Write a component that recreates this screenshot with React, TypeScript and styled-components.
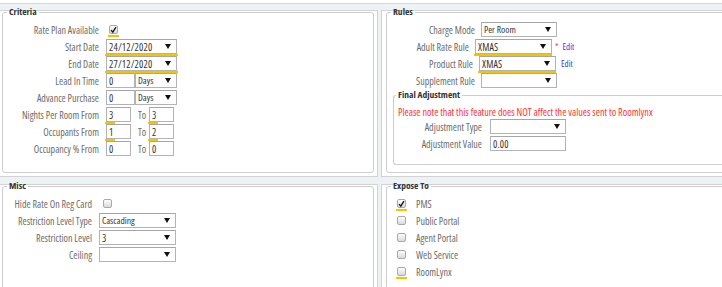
import React from 'react';
import styled, { createGlobalStyle } from 'styled-components';

const Global = createGlobalStyle`
  html, body { margin: 0; padding: 0; background: #edf2f5; overflow: hidden; }
  body {
    font-family: "Open Sans", "Liberation Sans", Arial, sans-serif;
    font-stretch: 75%;
    font-size: 10px;
    color: #6c6c6c;
  }
`;

const Page = styled.div`
  width: 900px;
`;

const TopEdge = styled.div`
  height: 3px;
  background: #fff;
  border-bottom: 1px solid #d6d6d6;
`;

const Grid = styled.div`
  display: grid;
  grid-template-columns: 378px 480px;
  column-gap: 3px;
  row-gap: 7px;
  margin-top: 6px;
`;

const Panel = styled.section<{ $h: number; $side: 'left' | 'right' }>`
  box-sizing: border-box;
  height: ${(p) => p.$h}px;
  background: #fff;
  border-top: 1px solid #d3d3d3;
  border-bottom: 1px solid #d3d3d3;
  ${(p) => (p.$side === 'left' ? 'border-right: 1px solid #d3d3d3;' : 'border-left: 1px solid #d3d3d3;')}
  display: flex;
  flex-direction: column;
`;

const Fieldset = styled.fieldset<{ $ml: number }>`
  flex: 1;
  min-width: 0;
  margin: -4px 3px 3px ${(p) => p.$ml}px;
  padding: 0;
  border: 1px solid #cdcdcd;
  border-radius: 3px;
`;

const Legend = styled.legend<{ $inner?: boolean }>`
  margin-left: ${(p) => (p.$inner ? 2 : 4)}px;
  padding: 0 2px;
  font-weight: bold;
  font-size: 9.5px;
  line-height: 10px;
  color: #333;
`;

const Rows = styled.div<{ $pl?: number }>`
  margin-top: 4px;
  padding-left: ${(p) => p.$pl ?? 0}px;
`;

const Row = styled.div<{ $shift?: number }>`
  display: flex;
  align-items: center;
  height: 17px;
  margin-left: ${(p) => p.$shift ?? 0}px;
`;

const Label = styled.div<{ $w: number; $gap: number }>`
  width: ${(p) => p.$w}px;
  margin-right: ${(p) => p.$gap}px;
  text-align: right;
  white-space: nowrap;
  color: #6c6c6c;
`;

const Box = styled.div<{ $w: number; $mark?: number; $wide?: boolean }>`
  position: relative;
  box-sizing: border-box;
  width: ${(p) => p.$w}px;
  height: 15px;
  border: 1px solid #b3b3b3;
  border-top-color: #a6a6a6;
  background: #fff;
  display: flex;
  align-items: center;
  justify-content: space-between;
  padding: 0 5px 0 2px;
  color: #333;
  font-size: ${(p) => (p.$wide ? '10px' : '9.5px')};
  letter-spacing: ${(p) => (p.$wide ? '0.2px' : '0')};
  white-space: nowrap;
  &::after {
    content: '';
    display: ${(p) => (p.$mark ? 'block' : 'none')};
    position: absolute;
    left: -2px;
    bottom: -3px;
    width: ${(p) => p.$mark ?? 0}px;
    height: 2px;
    background: #f5c400;
  }
`;

const Arrow = styled.span`
  width: 0;
  height: 0;
  border-left: 3px solid transparent;
  border-right: 3px solid transparent;
  border-top: 5px solid #111;
`;

const To = styled.span`
  width: 11px;
  padding-left: 7px;
  color: #6c6c6c;
`;

const CheckBox = styled.span<{ $ml?: number; $mr?: number; $mark?: boolean }>`
  position: relative;
  display: inline-flex;
  align-items: center;
  justify-content: center;
  box-sizing: border-box;
  width: 9px;
  height: 9px;
  margin-left: ${(p) => p.$ml ?? 0}px;
  margin-right: ${(p) => p.$mr ?? 0}px;
  border: 1px solid #a9a9a9;
  border-radius: 2px;
  background: linear-gradient(#fdfdfd, #dadada);
  &::after {
    content: '';
    display: ${(p) => (p.$mark ? 'block' : 'none')};
    position: absolute;
    left: -2px;
    bottom: -4px;
    width: 11px;
    height: 2px;
    background: #f5c400;
  }
`;

const CheckText = styled.span`
  color: #6c6c6c;
`;

const Star = styled.span`
  color: #ff4040;
  margin-left: 3px;
  font-size: 9px;
`;

const EditLink = styled.a<{ $ml: number }>`
  color: #3d3ddc;
  margin-left: ${(p) => p.$ml}px;
  text-decoration: none;
  font-size: 9px;
`;

const Note = styled.div`
  margin-top: 6px;
  padding-left: 4px;
  line-height: 12px;
  color: #ff3434;
  font-size: 10.2px;
  white-space: nowrap;
`;

const InnerFieldset = styled.fieldset`
  margin: 1px 0 0 6px;
  padding: 0 0 12px 0;
  border: 1px solid #cdcdcd;
  border-right: none;
  border-radius: 3px 0 0 3px;
`;

const Tick = () => (
  <svg width="8" height="8" viewBox="0 0 8 8">
    <path d="M1.2 4.2 L3.2 6.4 L6.8 0.8" fill="none" stroke="#111" strokeWidth="1.5" />
  </svg>
);

type FieldProps = { w: number; value?: string; mark?: number; wide?: boolean };

const Select = ({ w, value, mark, wide }: FieldProps) => (
  <Box $w={w} $mark={mark} $wide={wide}>
    <span>{value ?? ''}</span>
    <Arrow />
  </Box>
);

const Input = ({ w, value, mark }: FieldProps) => (
  <Box $w={w} $mark={mark} $wide>
    <span>{value ?? ''}</span>
  </Box>
);

const CL = 96;
const CG = 7;

const Criteria = () => (
  <Panel $h={167} $side="left">
    <Fieldset $ml={2}>
      <Legend>Criteria</Legend>
      <Rows>
        <Row>
          <Label $w={CL} $gap={CG}>Rate Plan Available</Label>
          <CheckBox $ml={3} $mark>
            <Tick />
          </CheckBox>
        </Row>
        <Row>
          <Label $w={CL} $gap={CG}>Start Date</Label>
          <Select w={71} value="24/12/2020" mark={73} wide />
        </Row>
        <Row>
          <Label $w={CL} $gap={CG}>End Date</Label>
          <Select w={71} value="27/12/2020" mark={73} wide />
        </Row>
        <Row>
          <Label $w={CL} $gap={CG}>Lead In Time</Label>
          <Input w={29} value="0" />
          <Select w={42} value="Days" />
        </Row>
        <Row>
          <Label $w={CL} $gap={CG}>Advance Purchase</Label>
          <Input w={29} value="0" />
          <Select w={42} value="Days" />
        </Row>
        <Row>
          <Label $w={CL} $gap={CG}>Nights Per Room From</Label>
          <Input w={25} value="3" mark={10} />
          <To>To</To>
          <Input w={25} value="3" mark={10} />
        </Row>
        <Row>
          <Label $w={CL} $gap={CG}>Occupants From</Label>
          <Input w={25} value="1" mark={10} />
          <To>To</To>
          <Input w={25} value="2" mark={10} />
        </Row>
        <Row>
          <Label $w={CL} $gap={CG}>Occupancy % From</Label>
          <Input w={25} value="0" />
          <To>To</To>
          <Input w={25} value="0" />
        </Row>
      </Rows>
    </Fieldset>
  </Panel>
);

const RL = 88;

const Rules = () => (
  <Panel $h={167} $side="right">
    <Fieldset $ml={4}>
      <Legend>Rules</Legend>
      <Rows>
        <Row>
          <Label $w={RL} $gap={6}>Charge Mode</Label>
          <Select w={76} value="Per Room" />
        </Row>
        <Row $shift={-6}>
          <Label $w={RL} $gap={6}>Adult Rate Rule</Label>
          <Select w={77} value="XMAS" mark={78} wide />
          <Star>*</Star>
          <EditLink $ml={4} href="#">Edit</EditLink>
        </Row>
        <Row $shift={-2}>
          <Label $w={RL} $gap={6}>Product Rule</Label>
          <Select w={77} value="XMAS" mark={78} wide />
          <EditLink $ml={5} href="#">Edit</EditLink>
        </Row>
        <Row>
          <Label $w={RL} $gap={6}>Supplement Rule</Label>
          <Select w={76} />
        </Row>
      </Rows>
      <InnerFieldset>
        <Legend $inner>Final Adjustment</Legend>
        <Note>Please note that this feature does NOT affect the values sent to Roomlynx</Note>
        <Row>
          <Label $w={88} $gap={8}>Adjustment Type</Label>
          <Select w={76} />
        </Row>
        <Row>
          <Label $w={88} $gap={8}>Adjustment Value</Label>
          <Input w={76} value="0.00" />
        </Row>
      </InnerFieldset>
    </Fieldset>
  </Panel>
);

const ML = 89;

const Misc = () => (
  <Panel $h={110} $side="left">
    <Fieldset $ml={2}>
      <Legend>Misc</Legend>
      <Rows>
        <Row>
          <Label $w={ML} $gap={7}>Hide Rate On Reg Card</Label>
          <CheckBox $ml={4} />
        </Row>
        <Row>
          <Label $w={ML} $gap={7}>Restriction Level Type</Label>
          <Select w={77} value="Cascading" />
        </Row>
        <Row>
          <Label $w={ML} $gap={7}>Restriction Level</Label>
          <Select w={77} value="3" wide />
        </Row>
        <Row>
          <Label $w={ML} $gap={7}>Ceiling</Label>
          <Select w={77} />
        </Row>
      </Rows>
    </Fieldset>
  </Panel>
);

const exposeItems: { name: string; checked: boolean; mark: boolean }[] = [
  { name: 'PMS', checked: true, mark: true },
  { name: 'Public Portal', checked: false, mark: false },
  { name: 'Agent Portal', checked: false, mark: false },
  { name: 'Web Service', checked: false, mark: false },
  { name: 'RoomLynx', checked: false, mark: true },
];

const ExposeTo = () => (
  <Panel $h={110} $side="right">
    <Fieldset $ml={4}>
      <Legend>Expose To</Legend>
      <Rows $pl={10}>
        {exposeItems.map((it) => (
          <Row key={it.name}>
            <CheckBox $mr={10} $mark={it.mark}>
              {it.checked && <Tick />}
            </CheckBox>
            <CheckText>{it.name}</CheckText>
          </Row>
        ))}
      </Rows>
    </Fieldset>
  </Panel>
);

export default function App() {
  return (
    <Page>
      <Global />
      <TopEdge />
      <Grid>
        <Criteria />
        <Rules />
        <Misc />
        <ExposeTo />
      </Grid>
    </Page>
  );
}
